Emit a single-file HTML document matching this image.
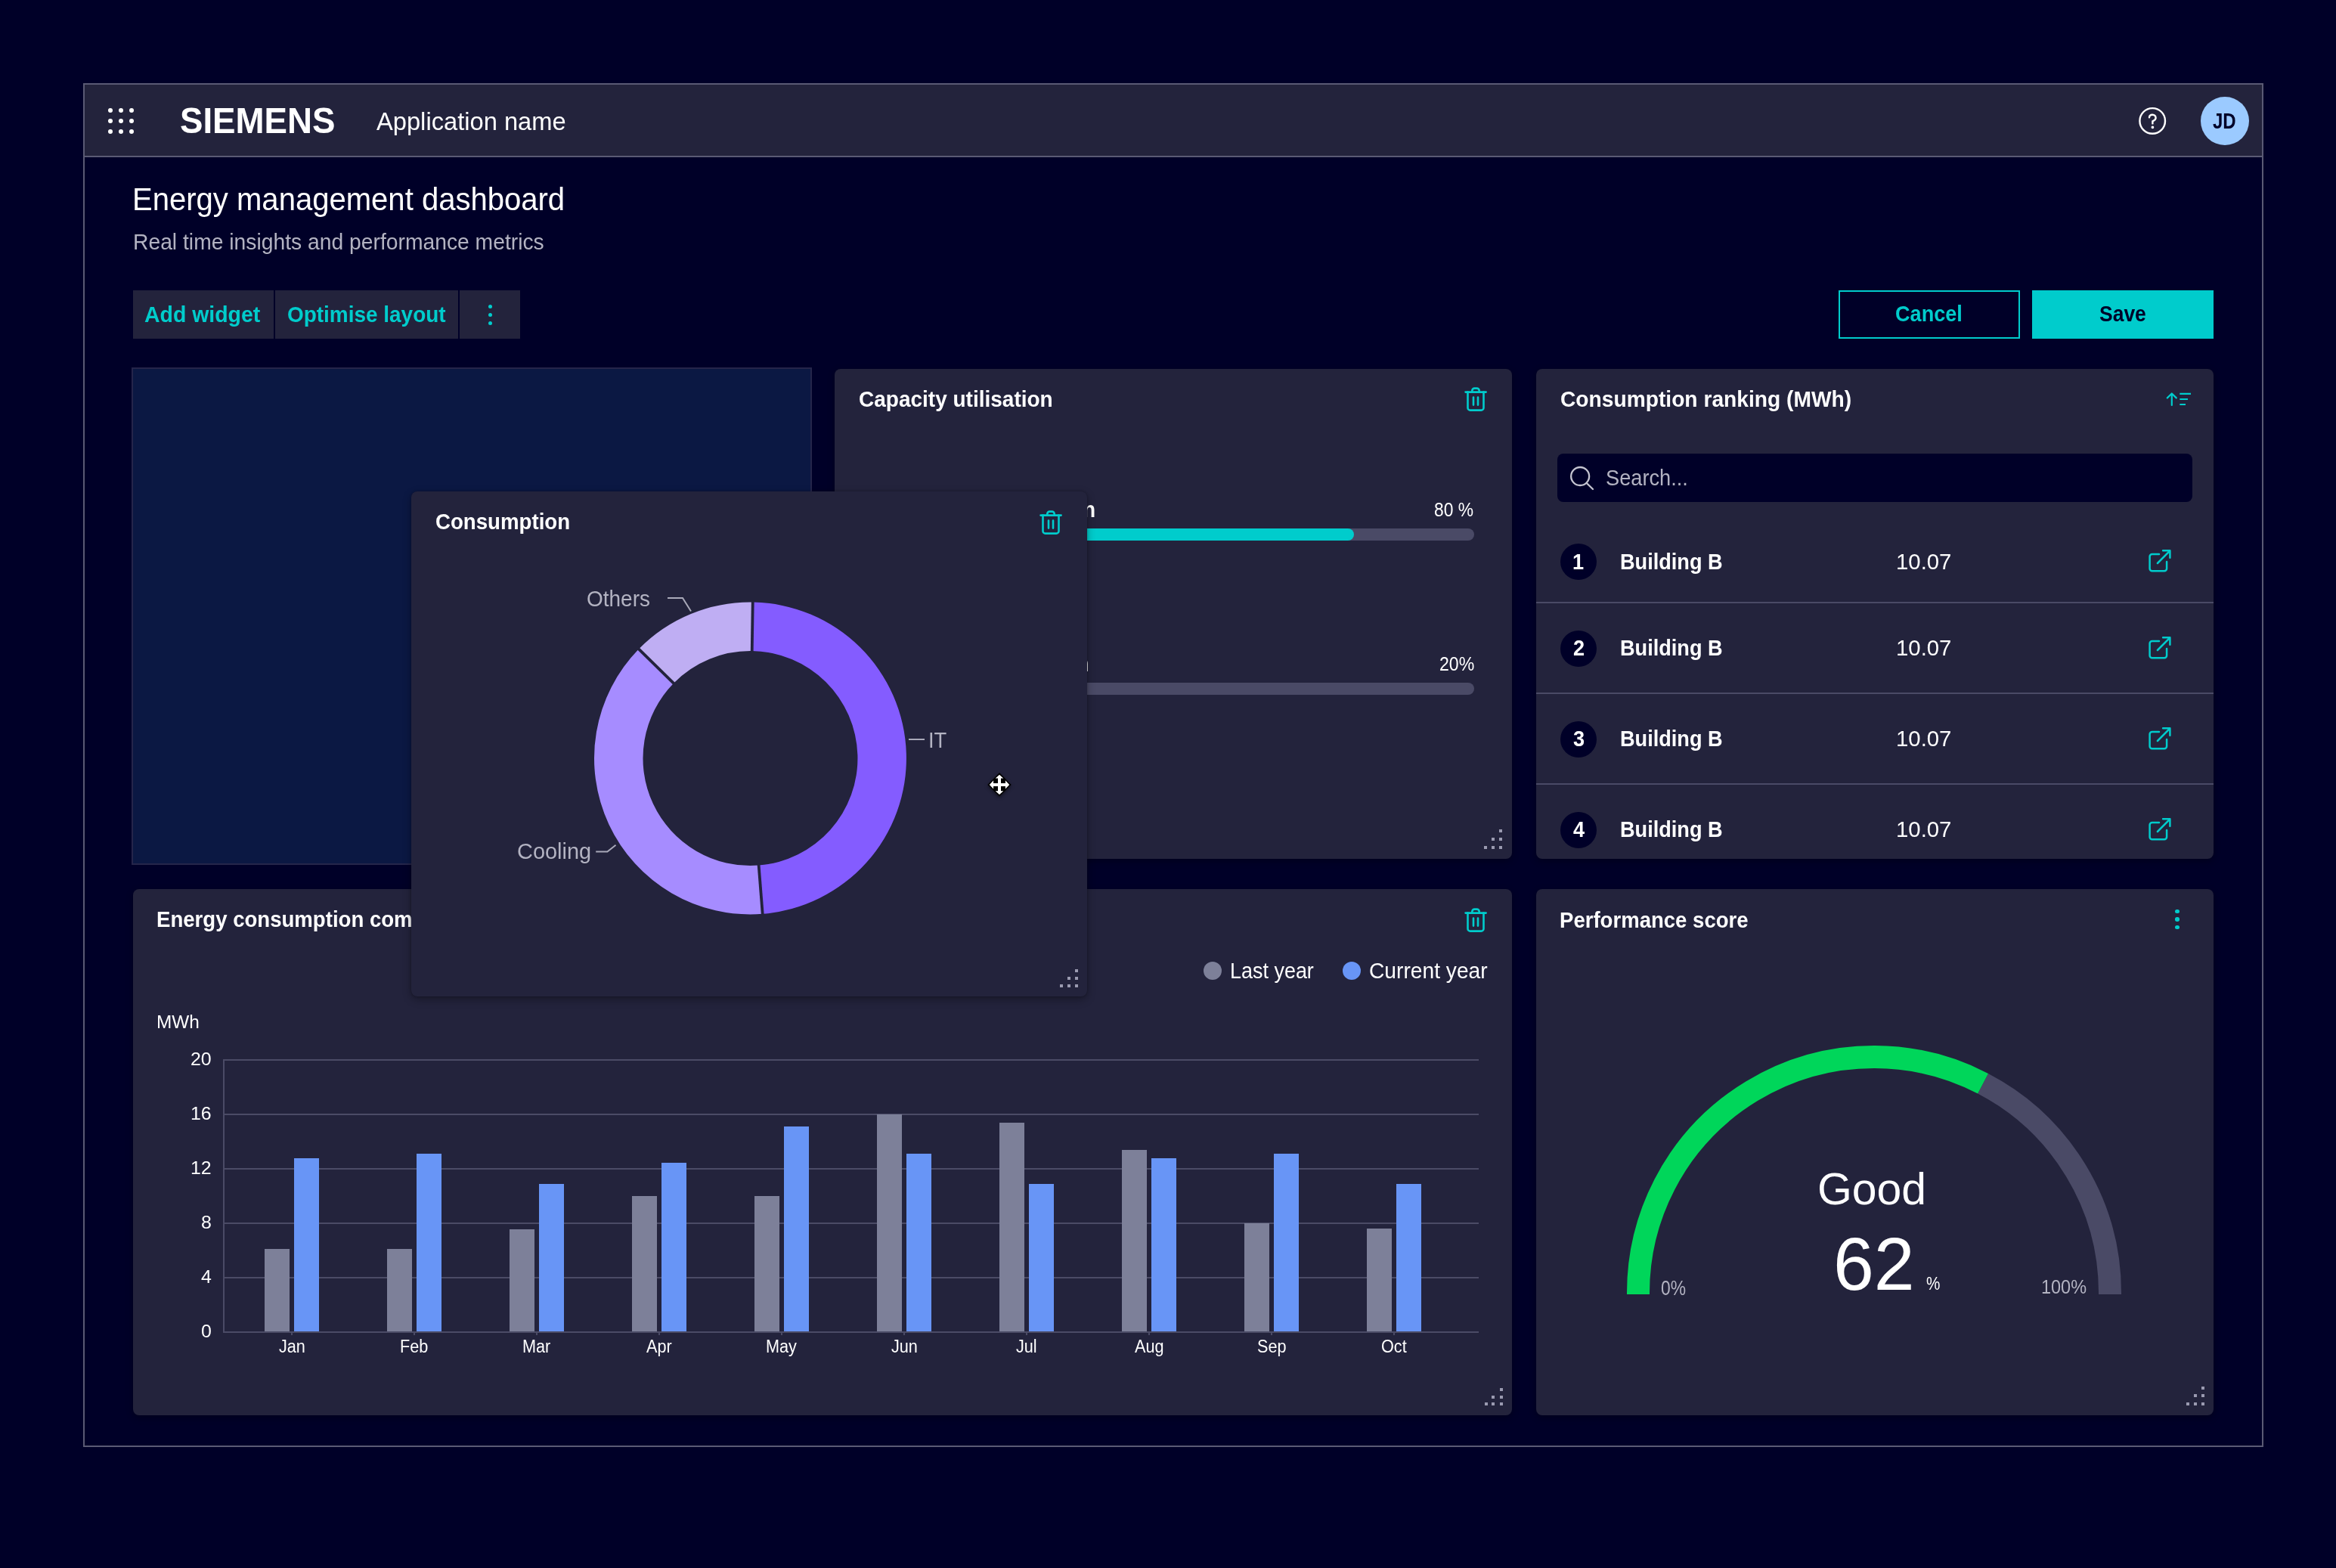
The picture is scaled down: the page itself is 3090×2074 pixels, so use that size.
<!DOCTYPE html>
<html><head><meta charset="utf-8"><title>Energy management dashboard</title>
<style>
html,body{margin:0;padding:0;width:3090px;height:2074px;overflow:hidden;background:#000028;}
body{position:relative;font-family:"Liberation Sans",sans-serif;}
.a{position:absolute;box-sizing:content-box;}
.t{position:absolute;white-space:nowrap;transform-origin:0 0;font-family:"Liberation Sans",sans-serif;}
</style></head><body>
<div class="a" style="left:110px;top:110px;width:2880px;height:1800px;border:2px solid #5a5a74;background:#000028"></div>
<div class="a" style="left:112px;top:112px;width:2880px;height:94px;background:#23233c;"></div>
<div class="a" style="left:112px;top:206px;width:2880px;height:2px;background:#5a5a74;"></div>
<div class="a" style="left:143px;top:143px;width:6px;height:6px;border-radius:50%;background:#fff"></div>
<div class="a" style="left:143px;top:157px;width:6px;height:6px;border-radius:50%;background:#fff"></div>
<div class="a" style="left:143px;top:171px;width:6px;height:6px;border-radius:50%;background:#fff"></div>
<div class="a" style="left:157px;top:143px;width:6px;height:6px;border-radius:50%;background:#fff"></div>
<div class="a" style="left:157px;top:157px;width:6px;height:6px;border-radius:50%;background:#fff"></div>
<div class="a" style="left:157px;top:171px;width:6px;height:6px;border-radius:50%;background:#fff"></div>
<div class="a" style="left:171px;top:143px;width:6px;height:6px;border-radius:50%;background:#fff"></div>
<div class="a" style="left:171px;top:157px;width:6px;height:6px;border-radius:50%;background:#fff"></div>
<div class="a" style="left:171px;top:171px;width:6px;height:6px;border-radius:50%;background:#fff"></div>
<span class="t" style="left:237.64px;top:134.71px;font-size:49px;line-height:49px;font-weight:700;color:#ffffff;transform:scaleX(0.9313)">SIEMENS</span>
<span class="t" style="left:497.70px;top:142.86px;font-size:34px;line-height:34px;font-weight:400;color:#ffffff;transform:scaleX(0.9608)">Application name</span>
<svg class="a" style="left:2820px;top:130px" width="60" height="60" viewBox="0 0 60 60" fill="none" stroke="#fff" stroke-width="2.4" stroke-linecap="round">
<circle cx="27.2" cy="29.9" r="16.8"/>
<path d="M23 25.3 C23.2 22.8 25 21.8 27.2 21.8 C29.8 21.8 31.6 23.6 31.6 25.9 C31.6 28 29.8 29.2 27.4 30.4 V33.4"/>
<circle cx="27.4" cy="38.3" r="1.2" fill="#fff" stroke-width="1.4"/></svg>
<div class="a" style="left:2911px;top:128px;width:64px;height:64px;border-radius:50%;background:#9bcaff"></div>
<span class="t" style="left:2927.17px;top:146.10px;font-size:29px;line-height:29px;font-weight:700;color:#000028;transform:scaleX(0.8286)">JD</span>
<span class="t" style="left:175.28px;top:242.06px;font-size:43px;line-height:43px;font-weight:400;color:#ffffff;transform:scaleX(0.9313)">Energy management dashboard</span>
<span class="t" style="left:176.11px;top:305.16px;font-size:30px;line-height:30px;font-weight:400;color:#b3b3c2;transform:scaleX(0.9425)">Real time insights and performance metrics</span>
<div class="a" style="left:176px;top:384px;width:186px;height:64px;background:#23233c;"></div>
<div class="a" style="left:364px;top:384px;width:242px;height:64px;background:#23233c;"></div>
<div class="a" style="left:608px;top:384px;width:80px;height:64px;background:#23233c;"></div>
<span class="t" style="left:191.35px;top:400.51px;font-size:30px;line-height:30px;font-weight:700;color:#00cccc;transform:scaleX(0.9481)">Add widget</span>
<span class="t" style="left:380.07px;top:400.51px;font-size:30px;line-height:30px;font-weight:700;color:#00cccc;transform:scaleX(0.9313)">Optimise layout</span>
<div class="a" style="left:645.5px;top:402.5px;width:5px;height:5px;border-radius:50%;background:#00cccc"></div>
<div class="a" style="left:645.5px;top:413.5px;width:5px;height:5px;border-radius:50%;background:#00cccc"></div>
<div class="a" style="left:645.5px;top:424.5px;width:5px;height:5px;border-radius:50%;background:#00cccc"></div>
<div class="a" style="left:2432px;top:384px;width:236px;height:60px;border:2px solid #00cccc"></div>
<div class="a" style="left:2688px;top:384px;width:240px;height:64px;background:#00cccc;"></div>
<span class="t" style="left:2507.00px;top:400.41px;font-size:30px;line-height:30px;font-weight:700;color:#00cccc;transform:scaleX(0.9032)">Cancel</span>
<span class="t" style="left:2777.42px;top:400.41px;font-size:30px;line-height:30px;font-weight:700;color:#000028;transform:scaleX(0.8824)">Save</span>
<div class="a" style="left:174px;top:486px;width:896px;height:654px;border:2px solid #25254a;background:#0b1843"></div>
<div class="a" style="left:1104px;top:488px;width:896px;height:648px;background:#23233c;border-radius:8px;box-shadow:0 3px 10px rgba(0,0,0,0.3)"></div>
<span class="t" style="left:1135.73px;top:513.50px;font-size:29px;line-height:29px;font-weight:700;color:#ffffff;transform:scaleX(0.9654)">Capacity utilisation</span>
<svg class="a" style="left:1937px;top:510px" width="32" height="36" viewBox="0 0 32 36" fill="none" stroke="#00cccc" stroke-width="2.6" stroke-linecap="round" stroke-linejoin="round">
<path d="M1.6 8.6 H28.6"/><path d="M10.3 8.6 V6.8 A3.2 3.2 0 0 1 13.5 3.6 H16.5 A3.2 3.2 0 0 1 19.7 6.8 V8.6"/>
<path d="M4.5 8.6 V29.4 A3.2 3.2 0 0 0 7.7 32.6 H22.3 A3.2 3.2 0 0 0 25.5 29.4 V8.6"/><path d="M12 15.5 V25.6 M18 15.5 V25.6"/></svg>
<span class="t" style="left:1305.68px;top:660.10px;font-size:29px;line-height:29px;font-weight:700;color:#ffffff;transform:scaleX(0.9352)">Production</span>
<span class="t" style="left:1897.12px;top:660.66px;font-size:26px;line-height:26px;font-weight:400;color:#ffffff;transform:scaleX(0.8793)">80 %</span>
<span class="t" style="left:1192.94px;top:864.30px;font-size:29px;line-height:29px;font-weight:700;color:#ffffff;transform:scaleX(0.9352)">Warehouse section</span>
<span class="t" style="left:1903.67px;top:865.66px;font-size:25px;line-height:25px;font-weight:400;color:#ffffff;transform:scaleX(0.9250)">20%</span>
<div class="a" style="left:1136px;top:698.5px;width:814px;height:16px;border-radius:8px;background:#4a4a66"></div>
<div class="a" style="left:1136px;top:698.5px;width:655px;height:16px;border-radius:8px;background:#00cccc"></div>
<div class="a" style="left:1136px;top:902.5px;width:814px;height:16px;border-radius:8px;background:#4a4a66"></div>
<div class="a" style="left:1983.3px;top:1096.5px;width:4px;height:4px;background:#9a9ab0"></div>
<div class="a" style="left:1973.0px;top:1107.5px;width:4px;height:4px;background:#9a9ab0"></div>
<div class="a" style="left:1983.3px;top:1107.5px;width:4px;height:4px;background:#9a9ab0"></div>
<div class="a" style="left:1962.7px;top:1118.6px;width:4px;height:4px;background:#9a9ab0"></div>
<div class="a" style="left:1973.0px;top:1118.6px;width:4px;height:4px;background:#9a9ab0"></div>
<div class="a" style="left:1983.3px;top:1118.6px;width:4px;height:4px;background:#9a9ab0"></div>
<div class="a" style="left:2032px;top:488px;width:896px;height:648px;background:#23233c;border-radius:8px;box-shadow:0 3px 10px rgba(0,0,0,0.3)"></div>
<span class="t" style="left:2063.63px;top:514.00px;font-size:29px;line-height:29px;font-weight:700;color:#ffffff;transform:scaleX(0.9718)">Consumption ranking (MWh)</span>
<svg class="a" style="left:2855px;top:505px" width="55" height="45" viewBox="0 0 55 45" fill="none" stroke="#00cccc" stroke-width="2.2" stroke-linecap="round" stroke-linejoin="round">
<path d="M17.8 31 V15.6 M11.8 21.4 L17.8 15.5 L23.8 21.4"/><path d="M28.3 15.9 H43 M28.3 23 H39 M28.3 30 H36" stroke-linecap="butt"/></svg>
<div class="a" style="left:2060px;top:600px;width:840px;height:64px;border-radius:8px;background:#000028"></div>
<svg class="a" style="left:2070px;top:610px" width="45" height="45" viewBox="0 0 45 45" fill="none" stroke="#c4c4d0" stroke-width="2.3" stroke-linecap="round">
<circle cx="20.15" cy="20" r="12"/><path d="M29 29.2 L37 37"/></svg>
<span class="t" style="left:2124.06px;top:617.96px;font-size:29px;line-height:29px;font-weight:400;color:#b3b3c2;transform:scaleX(0.9381)">Search...</span>
<div class="a" style="left:2064px;top:719.0px;width:48px;height:48px;border-radius:50%;background:#000028"></div>
<span class="t" style="left:2080.05px;top:728.50px;font-size:29px;line-height:29px;font-weight:700;color:#ffffff;transform:scaleX(0.9352)">1</span>
<span class="t" style="left:2143.13px;top:728.50px;font-size:29px;line-height:29px;font-weight:700;color:#ffffff;transform:scaleX(0.9352)">Building B</span>
<span class="t" style="left:2508.04px;top:727.66px;font-size:30px;line-height:30px;font-weight:400;color:#ffffff;transform:scaleX(0.9778)">10.07</span>
<svg class="a" style="left:2835px;top:720.0px" width="45" height="45" viewBox="0 0 45 45" fill="none" stroke="#00cccc" stroke-width="2.5" stroke-linecap="round" stroke-linejoin="round">
<path d="M21 12.9 H11.8 A3.2 3.2 0 0 0 8.6 16.1 V32 A3.2 3.2 0 0 0 11.8 35.2 H27.9 A3.2 3.2 0 0 0 31.1 32 V23"/>
<path d="M18.9 25 L35.4 8.3 M26.1 8.3 H35.4 V17.8"/></svg>
<div class="a" style="left:2064px;top:833.8px;width:48px;height:48px;border-radius:50%;background:#000028"></div>
<span class="t" style="left:2080.52px;top:843.30px;font-size:29px;line-height:29px;font-weight:700;color:#ffffff;transform:scaleX(0.9352)">2</span>
<span class="t" style="left:2143.13px;top:843.30px;font-size:29px;line-height:29px;font-weight:700;color:#ffffff;transform:scaleX(0.9352)">Building B</span>
<span class="t" style="left:2508.04px;top:842.46px;font-size:30px;line-height:30px;font-weight:400;color:#ffffff;transform:scaleX(0.9778)">10.07</span>
<svg class="a" style="left:2835px;top:834.8px" width="45" height="45" viewBox="0 0 45 45" fill="none" stroke="#00cccc" stroke-width="2.5" stroke-linecap="round" stroke-linejoin="round">
<path d="M21 12.9 H11.8 A3.2 3.2 0 0 0 8.6 16.1 V32 A3.2 3.2 0 0 0 11.8 35.2 H27.9 A3.2 3.2 0 0 0 31.1 32 V23"/>
<path d="M18.9 25 L35.4 8.3 M26.1 8.3 H35.4 V17.8"/></svg>
<div class="a" style="left:2064px;top:953.8px;width:48px;height:48px;border-radius:50%;background:#000028"></div>
<span class="t" style="left:2080.52px;top:963.30px;font-size:29px;line-height:29px;font-weight:700;color:#ffffff;transform:scaleX(0.9352)">3</span>
<span class="t" style="left:2143.13px;top:963.30px;font-size:29px;line-height:29px;font-weight:700;color:#ffffff;transform:scaleX(0.9352)">Building B</span>
<span class="t" style="left:2508.04px;top:962.46px;font-size:30px;line-height:30px;font-weight:400;color:#ffffff;transform:scaleX(0.9778)">10.07</span>
<svg class="a" style="left:2835px;top:954.8px" width="45" height="45" viewBox="0 0 45 45" fill="none" stroke="#00cccc" stroke-width="2.5" stroke-linecap="round" stroke-linejoin="round">
<path d="M21 12.9 H11.8 A3.2 3.2 0 0 0 8.6 16.1 V32 A3.2 3.2 0 0 0 11.8 35.2 H27.9 A3.2 3.2 0 0 0 31.1 32 V23"/>
<path d="M18.9 25 L35.4 8.3 M26.1 8.3 H35.4 V17.8"/></svg>
<div class="a" style="left:2064px;top:1073.8px;width:48px;height:48px;border-radius:50%;background:#000028"></div>
<span class="t" style="left:2080.52px;top:1083.30px;font-size:29px;line-height:29px;font-weight:700;color:#ffffff;transform:scaleX(0.9352)">4</span>
<span class="t" style="left:2143.13px;top:1083.30px;font-size:29px;line-height:29px;font-weight:700;color:#ffffff;transform:scaleX(0.9352)">Building B</span>
<span class="t" style="left:2508.04px;top:1082.46px;font-size:30px;line-height:30px;font-weight:400;color:#ffffff;transform:scaleX(0.9778)">10.07</span>
<svg class="a" style="left:2835px;top:1074.8px" width="45" height="45" viewBox="0 0 45 45" fill="none" stroke="#00cccc" stroke-width="2.5" stroke-linecap="round" stroke-linejoin="round">
<path d="M21 12.9 H11.8 A3.2 3.2 0 0 0 8.6 16.1 V32 A3.2 3.2 0 0 0 11.8 35.2 H27.9 A3.2 3.2 0 0 0 31.1 32 V23"/>
<path d="M18.9 25 L35.4 8.3 M26.1 8.3 H35.4 V17.8"/></svg>
<div class="a" style="left:2032px;top:796px;width:896px;height:2px;background:#4a4a66;"></div>
<div class="a" style="left:2032px;top:916px;width:896px;height:2px;background:#4a4a66;"></div>
<div class="a" style="left:2032px;top:1036px;width:896px;height:2px;background:#4a4a66;"></div>
<div class="a" style="left:176px;top:1176px;width:1824px;height:696px;background:#23233c;border-radius:8px;box-shadow:0 3px 10px rgba(0,0,0,0.3)"></div>
<span class="t" style="left:207.10px;top:1202.00px;font-size:29px;line-height:29px;font-weight:700;color:#ffffff;transform:scaleX(0.9509)">Energy consumption comparison</span>
<svg class="a" style="left:1937px;top:1198.8px" width="32" height="36" viewBox="0 0 32 36" fill="none" stroke="#00cccc" stroke-width="2.6" stroke-linecap="round" stroke-linejoin="round">
<path d="M1.6 8.6 H28.6"/><path d="M10.3 8.6 V6.8 A3.2 3.2 0 0 1 13.5 3.6 H16.5 A3.2 3.2 0 0 1 19.7 6.8 V8.6"/>
<path d="M4.5 8.6 V29.4 A3.2 3.2 0 0 0 7.7 32.6 H22.3 A3.2 3.2 0 0 0 25.5 29.4 V8.6"/><path d="M12 15.5 V25.6 M18 15.5 V25.6"/></svg>
<div class="a" style="left:1592px;top:1272px;width:24px;height:24px;border-radius:50%;background:#7d8099"></div>
<div class="a" style="left:1776px;top:1272px;width:24px;height:24px;border-radius:50%;background:#6895f6"></div>
<span class="t" style="left:1627.30px;top:1268.96px;font-size:30px;line-height:30px;font-weight:400;color:#ffffff;transform:scaleX(0.8983)">Last year</span>
<span class="t" style="left:1810.92px;top:1268.96px;font-size:30px;line-height:30px;font-weight:400;color:#ffffff;transform:scaleX(0.9396)">Current year</span>
<span class="t" style="left:207.38px;top:1340.96px;font-size:23px;line-height:23px;font-weight:400;color:#ffffff;transform:scaleX(1.0600)">MWh</span>
<div class="a" style="left:296px;top:1401px;width:1660px;height:2px;background:#4b4b66;"></div>
<div class="a" style="left:296px;top:1473px;width:1660px;height:2px;background:#4b4b66;"></div>
<div class="a" style="left:296px;top:1545px;width:1660px;height:2px;background:#4b4b66;"></div>
<div class="a" style="left:296px;top:1617px;width:1660px;height:2px;background:#4b4b66;"></div>
<div class="a" style="left:296px;top:1689px;width:1660px;height:2px;background:#4b4b66;"></div>
<div class="a" style="left:296px;top:1761px;width:1660px;height:2px;background:#4b4b66;"></div>
<div class="a" style="left:295px;top:1401px;width:2px;height:362px;background:#4b4b66;"></div>
<span class="t" style="left:252.12px;top:1389.96px;font-size:23px;line-height:23px;font-weight:400;color:#ffffff;transform:scaleX(1.0833)">20</span>
<span class="t" style="left:251.92px;top:1461.96px;font-size:23px;line-height:23px;font-weight:400;color:#ffffff;transform:scaleX(1.0833)">16</span>
<span class="t" style="left:251.92px;top:1533.96px;font-size:23px;line-height:23px;font-weight:400;color:#ffffff;transform:scaleX(1.0833)">12</span>
<span class="t" style="left:266.00px;top:1605.96px;font-size:23px;line-height:23px;font-weight:400;color:#ffffff;transform:scaleX(1.0833)">8</span>
<span class="t" style="left:266.00px;top:1677.96px;font-size:23px;line-height:23px;font-weight:400;color:#ffffff;transform:scaleX(1.0833)">4</span>
<span class="t" style="left:266.00px;top:1749.96px;font-size:23px;line-height:23px;font-weight:400;color:#ffffff;transform:scaleX(1.0833)">0</span>
<div class="a" style="left:350px;top:1652.2px;width:33px;height:108.8px;background:#7d8099"></div>
<div class="a" style="left:389px;top:1531.6px;width:33px;height:229.4px;background:#6895f6"></div>
<div class="a" style="left:385px;top:1763px;width:2px;height:3px;background:#4b4b66;"></div>
<span class="t" style="left:368.59px;top:1770.46px;font-size:23px;line-height:23px;font-weight:400;color:#ffffff;transform:scaleX(0.9411)">Jan</span>
<div class="a" style="left:512px;top:1652.2px;width:33px;height:108.8px;background:#7d8099"></div>
<div class="a" style="left:551px;top:1526.2px;width:33px;height:234.8px;background:#6895f6"></div>
<div class="a" style="left:547px;top:1763px;width:2px;height:3px;background:#4b4b66;"></div>
<span class="t" style="left:528.71px;top:1770.46px;font-size:23px;line-height:23px;font-weight:400;color:#ffffff;transform:scaleX(0.9411)">Feb</span>
<div class="a" style="left:674px;top:1625.9px;width:33px;height:135.1px;background:#7d8099"></div>
<div class="a" style="left:713px;top:1565.8px;width:33px;height:195.2px;background:#6895f6"></div>
<div class="a" style="left:709px;top:1763px;width:2px;height:3px;background:#4b4b66;"></div>
<span class="t" style="left:690.71px;top:1770.46px;font-size:23px;line-height:23px;font-weight:400;color:#ffffff;transform:scaleX(0.9411)">Mar</span>
<div class="a" style="left:836px;top:1582.0px;width:33px;height:179.0px;background:#7d8099"></div>
<div class="a" style="left:875px;top:1537.9px;width:33px;height:223.1px;background:#6895f6"></div>
<div class="a" style="left:871px;top:1763px;width:2px;height:3px;background:#4b4b66;"></div>
<span class="t" style="left:855.06px;top:1770.46px;font-size:23px;line-height:23px;font-weight:400;color:#ffffff;transform:scaleX(0.9411)">Apr</span>
<div class="a" style="left:998px;top:1582.0px;width:33px;height:179.0px;background:#7d8099"></div>
<div class="a" style="left:1037px;top:1490.2px;width:33px;height:270.8px;background:#6895f6"></div>
<div class="a" style="left:1033px;top:1763px;width:2px;height:3px;background:#4b4b66;"></div>
<span class="t" style="left:1012.83px;top:1770.46px;font-size:23px;line-height:23px;font-weight:400;color:#ffffff;transform:scaleX(0.9411)">May</span>
<div class="a" style="left:1160px;top:1474.0px;width:33px;height:287.0px;background:#7d8099"></div>
<div class="a" style="left:1199px;top:1526.2px;width:33px;height:234.8px;background:#6895f6"></div>
<div class="a" style="left:1195px;top:1763px;width:2px;height:3px;background:#4b4b66;"></div>
<span class="t" style="left:1178.59px;top:1770.46px;font-size:23px;line-height:23px;font-weight:400;color:#ffffff;transform:scaleX(0.9411)">Jun</span>
<div class="a" style="left:1322px;top:1484.8px;width:33px;height:276.2px;background:#7d8099"></div>
<div class="a" style="left:1361px;top:1565.8px;width:33px;height:195.2px;background:#6895f6"></div>
<div class="a" style="left:1357px;top:1763px;width:2px;height:3px;background:#4b4b66;"></div>
<span class="t" style="left:1344.35px;top:1770.46px;font-size:23px;line-height:23px;font-weight:400;color:#ffffff;transform:scaleX(0.9411)">Jul</span>
<div class="a" style="left:1484px;top:1520.8px;width:33px;height:240.2px;background:#7d8099"></div>
<div class="a" style="left:1523px;top:1531.6px;width:33px;height:229.4px;background:#6895f6"></div>
<div class="a" style="left:1519px;top:1763px;width:2px;height:3px;background:#4b4b66;"></div>
<span class="t" style="left:1501.18px;top:1770.46px;font-size:23px;line-height:23px;font-weight:400;color:#ffffff;transform:scaleX(0.9411)">Aug</span>
<div class="a" style="left:1646px;top:1618.0px;width:33px;height:143.0px;background:#7d8099"></div>
<div class="a" style="left:1685px;top:1526.2px;width:33px;height:234.8px;background:#6895f6"></div>
<div class="a" style="left:1681px;top:1763px;width:2px;height:3px;background:#4b4b66;"></div>
<span class="t" style="left:1662.71px;top:1770.46px;font-size:23px;line-height:23px;font-weight:400;color:#ffffff;transform:scaleX(0.9411)">Sep</span>
<div class="a" style="left:1808px;top:1625.2px;width:33px;height:135.8px;background:#7d8099"></div>
<div class="a" style="left:1847px;top:1565.8px;width:33px;height:195.2px;background:#6895f6"></div>
<div class="a" style="left:1843px;top:1763px;width:2px;height:3px;background:#4b4b66;"></div>
<span class="t" style="left:1826.59px;top:1770.46px;font-size:23px;line-height:23px;font-weight:400;color:#ffffff;transform:scaleX(0.9411)">Oct</span>
<div class="a" style="left:1983.6px;top:1835.7px;width:4px;height:4px;background:#9a9ab0"></div>
<div class="a" style="left:1973.4px;top:1845.9px;width:4px;height:4px;background:#9a9ab0"></div>
<div class="a" style="left:1983.6px;top:1845.9px;width:4px;height:4px;background:#9a9ab0"></div>
<div class="a" style="left:1964.0px;top:1855.3px;width:4px;height:4px;background:#9a9ab0"></div>
<div class="a" style="left:1973.4px;top:1855.3px;width:4px;height:4px;background:#9a9ab0"></div>
<div class="a" style="left:1983.6px;top:1855.3px;width:4px;height:4px;background:#9a9ab0"></div>
<div class="a" style="left:2032px;top:1176px;width:896px;height:696px;background:#23233c;border-radius:8px;box-shadow:0 3px 10px rgba(0,0,0,0.3)"></div>
<span class="t" style="left:2062.60px;top:1203.00px;font-size:29px;line-height:29px;font-weight:700;color:#ffffff;transform:scaleX(0.9500)">Performance score</span>
<div class="a" style="left:2877.2px;top:1202.7px;width:5.6px;height:5.6px;border-radius:50%;background:#00cccc"></div>
<div class="a" style="left:2877.2px;top:1213.0px;width:5.6px;height:5.6px;border-radius:50%;background:#00cccc"></div>
<div class="a" style="left:2877.2px;top:1223.6px;width:5.6px;height:5.6px;border-radius:50%;background:#00cccc"></div>
<svg class="a" style="left:0;top:0" width="3090" height="2074" fill="none">
<path d="M2791 1712 V1710 A312 312 0 0 0 2623.07 1433.25" stroke="#4a4a66" stroke-width="30"/>
<path d="M2167 1712 V1710 A312 312 0 0 1 2623.07 1433.25" stroke="#00d65a" stroke-width="30"/></svg>
<span class="t" style="left:2404.00px;top:1543.67px;font-size:59px;line-height:59px;font-weight:400;color:#ffffff;transform:scaleX(0.9986)">Good</span>
<span class="t" style="left:2424.61px;top:1622.14px;font-size:99px;line-height:99px;font-weight:400;color:#ffffff;transform:scaleX(0.9780)">62</span>
<span class="t" style="left:2547.54px;top:1686.46px;font-size:24px;line-height:24px;font-weight:400;color:#ffffff;transform:scaleX(0.8600)">%</span>
<span class="t" style="left:2197.18px;top:1689.96px;font-size:28px;line-height:28px;font-weight:400;color:#b3b3c2;transform:scaleX(0.8154)">0%</span>
<span class="t" style="left:2699.59px;top:1688.66px;font-size:26px;line-height:26px;font-weight:400;color:#b3b3c2;transform:scaleX(0.9031)">100%</span>
<div class="a" style="left:2911.9px;top:1833.8px;width:4px;height:4px;background:#9a9ab0"></div>
<div class="a" style="left:2901.8px;top:1844.4px;width:4px;height:4px;background:#9a9ab0"></div>
<div class="a" style="left:2911.9px;top:1844.4px;width:4px;height:4px;background:#9a9ab0"></div>
<div class="a" style="left:2891.7px;top:1854.5px;width:4px;height:4px;background:#9a9ab0"></div>
<div class="a" style="left:2901.8px;top:1854.5px;width:4px;height:4px;background:#9a9ab0"></div>
<div class="a" style="left:2911.9px;top:1854.5px;width:4px;height:4px;background:#9a9ab0"></div>
<div class="a" style="left:544px;top:650px;width:894px;height:668px;background:#23233c;border-radius:8px;box-shadow:0 4px 12px rgba(0,0,0,0.32), 0 0 3px rgba(0,0,0,0.25)"></div>
<span class="t" style="left:575.65px;top:675.80px;font-size:29px;line-height:29px;font-weight:700;color:#ffffff;transform:scaleX(0.9533)">Consumption</span>
<svg class="a" style="left:1375.4px;top:672.9px" width="32" height="36" viewBox="0 0 32 36" fill="none" stroke="#00cccc" stroke-width="2.6" stroke-linecap="round" stroke-linejoin="round">
<path d="M1.6 8.6 H28.6"/><path d="M10.3 8.6 V6.8 A3.2 3.2 0 0 1 13.5 3.6 H16.5 A3.2 3.2 0 0 1 19.7 6.8 V8.6"/>
<path d="M4.5 8.6 V29.4 A3.2 3.2 0 0 0 7.7 32.6 H22.3 A3.2 3.2 0 0 0 25.5 29.4 V8.6"/><path d="M12 15.5 V25.6 M18 15.5 V25.6"/></svg>
<svg class="a" style="left:0;top:0" width="3090" height="2074"><path d="M995.74 796.53 A206.5 206.5 0 0 1 1008.70 1208.86 L1003.64 1144.56 A142 142 0 0 0 994.73 861.02Z" fill="#845cff"/><path d="M1008.70 1208.86 A206.5 206.5 0 0 1 844.96 858.52 L891.04 903.65 A142 142 0 0 0 1003.64 1144.56Z" fill="#a68cff"/><path d="M844.96 858.52 A206.5 206.5 0 0 1 995.74 796.53 L994.73 861.02 A142 142 0 0 0 891.04 903.65Z" fill="#bfaef3"/><path d="M994.70 863.02 L995.77 794.53" stroke="#23233c" stroke-width="3.8"/><path d="M1003.48 1142.57 L1008.86 1210.86" stroke="#23233c" stroke-width="3.8"/><path d="M892.47 905.05 L843.53 857.12" stroke="#23233c" stroke-width="3.8"/><path d="M883 791 H903 L914 808.5 M1202 978 H1223 M788.2 1126.6 H803.4 L814.5 1117.7" stroke="#a9a9b9" stroke-width="2" fill="none"/></svg>
<span class="t" style="left:775.97px;top:776.86px;font-size:30px;line-height:30px;font-weight:400;color:#b3b3c2;transform:scaleX(0.9330)">Others</span>
<span class="t" style="left:1228.26px;top:963.66px;font-size:30px;line-height:30px;font-weight:400;color:#b3b3c2;transform:scaleX(0.9130)">IT</span>
<span class="t" style="left:684.47px;top:1111.06px;font-size:30px;line-height:30px;font-weight:400;color:#b3b3c2;transform:scaleX(0.9653)">Cooling</span>
<div class="a" style="left:1421.9px;top:1282.2px;width:4px;height:4px;background:#9a9ab0"></div>
<div class="a" style="left:1411.7px;top:1292.0px;width:4px;height:4px;background:#9a9ab0"></div>
<div class="a" style="left:1421.9px;top:1292.0px;width:4px;height:4px;background:#9a9ab0"></div>
<div class="a" style="left:1401.8px;top:1301.8px;width:4px;height:4px;background:#9a9ab0"></div>
<div class="a" style="left:1411.7px;top:1301.8px;width:4px;height:4px;background:#9a9ab0"></div>
<div class="a" style="left:1421.9px;top:1301.8px;width:4px;height:4px;background:#9a9ab0"></div>
<svg class="a" style="left:1300px;top:1015px;filter:drop-shadow(0 2px 2px rgba(0,0,0,0.5))" width="45" height="45" viewBox="0 0 45 45">
<path d="M22 7 L37.6 23 L22 38.6 L6.4 23Z" fill="#000"/>
<path d="M22 9.8 L27.3 14.6 H24 V21 H29.9 V17.2 L35.2 23 L29.9 28.6 V25 H24 V31.2 H27.3 L22 36 L16.7 31.2 H20 V25 H14.1 V28.6 L8.8 23 L14.1 17.2 V21 H20 V14.6 H16.7Z" fill="#fff"/></svg>
</body></html>
